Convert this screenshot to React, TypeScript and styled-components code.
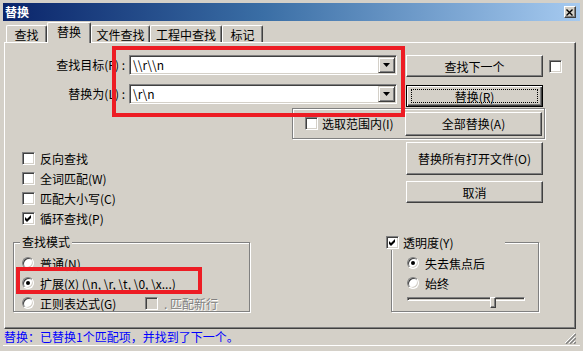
import React from 'react';
import styled, { createGlobalStyle } from 'styled-components';

const FACE = '#d4d0c8';
const SHADOW = '#808080';
const DARK = '#404040';

const GlobalStyle = createGlobalStyle`
  html, body {
    margin: 0;
    padding: 0;
    background: ${FACE};
  }
  body {
    font-family: 'Noto Sans CJK SC', 'DejaVu Sans', sans-serif;
    font-size: 12px;
    color: #000;
  }
  * {
    box-sizing: border-box;
  }
`;

type Option = { label: string; checked: boolean };

const OPTIONS: Option[] = [
  { label: '反向查找', checked: false },
  { label: '全词匹配(W)', checked: false },
  { label: '匹配大小写(C)', checked: false },
  { label: '循环查找(P)', checked: true }
];

const SLIDER_VALUE = 0.7;

const Window = styled.div`
  width: 583px;
  height: 351px;
  padding: 3px;
  background: ${FACE};
  overflow: hidden;
`;

const TitleBar = styled.div`
  display: flex;
  align-items: center;
  justify-content: space-between;
  height: 18px;
  padding: 0 4px 0 2px;
  background: linear-gradient(90deg, #0a246a 0%, #3a6ea5 45%, #a6caf0 100%);
`;

const TitleText = styled.span`
  color: #fff;
  font-weight: 700;
  font-size: 12px;
  line-height: 18px;
`;

const CloseButton = styled.div`
  display: flex;
  align-items: center;
  justify-content: center;
  width: 12px;
  height: 12px;
  background: ${FACE};
  border: 1px solid;
  border-color: #fff ${DARK} ${DARK} #fff;
  box-shadow: inset -1px -1px 0 ${SHADOW};
`;

const TabRow = styled.div`
  display: flex;
  align-items: flex-end;
  height: 20px;
  margin: 1px 0 0 3px;
`;

const Tab = styled.div<{ $w: number; $active?: boolean }>`
  position: relative;
  z-index: ${(p) => (p.$active ? 1 : 0)};
  display: flex;
  justify-content: center;
  width: ${(p) => p.$w}px;
  height: ${(p) => (p.$active ? 21 : 17)}px;
  margin-bottom: ${(p) => (p.$active ? -1 : 0)}px;
  padding-top: 2px;
  line-height: 14px;
  background: ${FACE};
  border-top: 1px solid #fff;
  border-left: 1px solid #fff;
  border-right: 1px solid ${DARK};
  border-radius: 2px 2px 0 0;
  box-shadow: inset -1px 0 0 ${SHADOW};
`;

const Panel = styled.div`
  position: relative;
  width: 572px;
  height: 287px;
  margin-left: 1px;
  border: 1px solid;
  border-color: #fff ${DARK} ${DARK} #fff;
  box-shadow: inset -1px -1px 0 ${SHADOW};
`;

const FieldRow = styled.div<{ $top: number }>`
  display: flex;
  align-items: flex-start;
  margin-top: ${(p) => p.$top}px;
`;

const FieldLabel = styled.label`
  width: 120px;
  height: 20px;
  line-height: 20px;
  text-align: right;
  white-space: nowrap;
`;

const Combo = styled.div`
  display: flex;
  align-items: center;
  width: 268px;
  height: 20px;
  margin-left: 4px;
  background: #fff;
  border: 1px solid;
  border-color: ${SHADOW} #fff #fff ${SHADOW};
  box-shadow: inset 1px 1px 0 ${DARK}, inset -1px -1px 0 ${FACE};
  padding: 1px 1px 1px 3px;
`;

const ComboText = styled.span`
  flex: 1;
  line-height: 16px;
  white-space: nowrap;
`;

const DropButton = styled.div`
  display: flex;
  align-items: center;
  justify-content: center;
  width: 17px;
  height: 16px;
  background: ${FACE};
  border: 1px solid;
  border-color: ${FACE} ${DARK} ${DARK} ${FACE};
  box-shadow: inset 1px 1px 0 #fff, inset -1px -1px 0 ${SHADOW};
`;

const Button = styled.button<{ $w?: number; $h?: number; $default?: boolean }>`
  position: relative;
  display: flex;
  align-items: center;
  justify-content: center;
  flex-shrink: 0;
  width: ${(p) => p.$w ?? 137}px;
  height: ${(p) => p.$h ?? 22}px;
  margin: 0;
  padding: 0;
  font: inherit;
  color: #000;
  background: ${FACE};
  border: 1px solid;
  border-color: ${(p) => (p.$default ? '#000' : `#fff ${DARK} ${DARK} #fff`)};
  box-shadow: ${(p) =>
    p.$default
      ? `inset 1px 1px 0 #fff, inset -1px -1px 0 ${DARK}, inset -2px -2px 0 ${SHADOW}`
      : `inset -1px -1px 0 ${SHADOW}`};
`;

const FocusRing = styled.span`
  position: absolute;
  inset: 3px 4px 3px 4px;
  border: 1px dotted #000;
`;

const CheckBox = styled.span<{ $disabled?: boolean }>`
  display: inline-flex;
  align-items: center;
  justify-content: center;
  flex-shrink: 0;
  width: 13px;
  height: 13px;
  background: ${(p) => (p.$disabled ? FACE : '#fff')};
  border: 1px solid;
  border-color: ${SHADOW} #fff #fff ${SHADOW};
  box-shadow: inset 1px 1px 0 ${DARK}, inset -1px -1px 0 ${FACE};
`;

const Radio = styled.span<{ $checked?: boolean }>`
  display: inline-flex;
  align-items: center;
  justify-content: center;
  flex-shrink: 0;
  width: 12px;
  height: 12px;
  border-radius: 50%;
  background: #fff;
  border: 1px solid;
  border-color: ${SHADOW} #fff #fff ${SHADOW};
  box-shadow: inset 1px 1px 0 ${DARK}, inset -1px -1px 0 ${FACE};
  &::after {
    content: '';
    display: ${(p) => (p.$checked ? 'block' : 'none')};
    width: 4px;
    height: 4px;
    border-radius: 50%;
    background: #000;
  }
`;

const HeaderCheck = styled(CheckBox)`
  margin: 5px 0 0 6px;
`;

const ScopeGroup = styled.div`
  display: flex;
  align-items: center;
  width: 253px;
  height: 31px;
  margin: 1px 0 0 287px;
  padding: 0 2px 0 12px;
  border: 1px solid ${SHADOW};
  box-shadow: inset 1px 1px 0 #fff, 1px 1px 0 #fff;
`;

const OptionLine = styled.div<{ $gap?: number }>`
  display: flex;
  align-items: center;
  gap: ${(p) => p.$gap ?? 5}px;
  height: 20px;
  white-space: nowrap;
`;

const OptionText = styled.span<{ $w?: number; $disabled?: boolean }>`
  display: inline-block;
  width: ${(p) => (p.$w ? `${p.$w}px` : 'auto')};
  color: ${(p) => (p.$disabled ? SHADOW : '#000')};
  text-shadow: ${(p) => (p.$disabled ? '1px 1px 0 #fff' : 'none')};
`;

const PushRight = styled.div`
  margin-left: auto;
`;

const MiddleSection = styled.div`
  display: flex;
  height: 97px;
`;

const OptionColumn = styled.div`
  display: flex;
  flex-direction: column;
  width: 401px;
  padding: 9px 0 0 17px;
`;

const ButtonColumn = styled.div`
  display: flex;
  flex-direction: column;
  gap: 6px;
  padding-top: 3px;
`;

const BottomSection = styled.div`
  display: flex;
  align-items: flex-start;
  padding-top: 6px;
`;

const GroupBox = styled.div<{ $left: number; $w: number; $pl: number }>`
  position: relative;
  width: ${(p) => p.$w}px;
  height: 70px;
  margin-left: ${(p) => p.$left}px;
  padding: 10px 0 0 ${(p) => p.$pl}px;
  border: 1px solid ${SHADOW};
  box-shadow: inset 1px 1px 0 #fff, 1px 1px 0 #fff;
`;

const GroupLegend = styled.span`
  position: absolute;
  left: 6px;
  top: -8px;
  padding: 0 2px;
  line-height: 14px;
  background: ${FACE};
`;

const CheckLegend = styled.div`
  position: absolute;
  left: -6px;
  top: -8px;
  display: flex;
  align-items: center;
  gap: 4px;
  width: 119px;
  height: 15px;
  background: ${FACE};
  white-space: nowrap;
`;

const Slider = styled.div`
  position: relative;
  width: 118px;
  height: 11px;
`;

const SliderTrack = styled.div`
  margin-top: 4px;
  height: 4px;
  border: 1px solid;
  border-color: ${SHADOW} #fff #fff ${SHADOW};
  box-shadow: inset 1px 1px 0 ${DARK};
`;

const SliderThumb = styled.div`
  position: absolute;
  top: 0;
  width: 6px;
  height: 11px;
  background: ${FACE};
  border: 1px solid;
  border-color: #fff ${DARK} ${DARK} #fff;
  box-shadow: inset -1px -1px 0 ${SHADOW};
`;

const Annotation = styled.div<{ $x: number; $y: number; $w: number; $h: number }>`
  position: absolute;
  left: ${(p) => p.$x}px;
  top: ${(p) => p.$y}px;
  width: ${(p) => p.$w}px;
  height: ${(p) => p.$h}px;
  border: 4px solid #ed1c24;
  pointer-events: none;
  z-index: 3;
`;

const StatusBar = styled.div`
  display: flex;
  align-items: center;
  justify-content: space-between;
  height: 17px;
  padding: 0 1px 0 1px;
  border-bottom: 1px solid #fff;
  color: #0000ff;
  line-height: 16px;
`;

const Grip = styled.svg`
  align-self: flex-end;
  margin: 0 3px 1px 0;
`;

function Check() {
  return (
    <svg width="7" height="7" viewBox="0 0 7 7">
      <polygon points="0,2 2,4 6,0 6,3 2,7 0,5" fill="#000" />
    </svg>
  );
}

function Arrow() {
  return (
    <svg width="7" height="4" viewBox="0 0 7 4">
      <polygon points="0,0 7,0 3.5,4" fill="#000" />
    </svg>
  );
}

function App() {
  return (
    <>
      <GlobalStyle />
      <Window>
        <TitleBar>
          <TitleText>替换</TitleText>
          <CloseButton>
            <svg width="8" height="7" viewBox="0 0 8 7">
              <path d="M0.5 0.5 L6.5 6.5 M6.5 0.5 L0.5 6.5" stroke="#000" strokeWidth="1.4" />
            </svg>
          </CloseButton>
        </TitleBar>

        <TabRow>
          <Tab $w={41}>查找</Tab>
          <Tab $w={44} $active>
            替换
          </Tab>
          <Tab $w={59}>文件查找</Tab>
          <Tab $w={72}>工程中查找</Tab>
          <Tab $w={41}>标记</Tab>
        </TabRow>

        <Panel>
          <FieldRow $top={12}>
            <FieldLabel>查找目标(F) :</FieldLabel>
            <Combo>
              <ComboText>{'\\\\r\\\\n'}</ComboText>
              <DropButton>
                <Arrow />
              </DropButton>
            </Combo>
            <Button style={{ marginLeft: 9 }}>查找下一个</Button>
            <HeaderCheck />
          </FieldRow>

          <FieldRow $top={7}>
            <FieldLabel>替换为(L) :</FieldLabel>
            <Combo>
              <ComboText>{'\\r\\n'}</ComboText>
              <DropButton>
                <Arrow />
              </DropButton>
            </Combo>
            <Button $default style={{ marginLeft: 9, marginTop: 1 }}>
              <FocusRing />
              替换(R)
            </Button>
          </FieldRow>

          <ScopeGroup>
            <OptionLine $gap={4}>
              <CheckBox />
              <OptionText>选取范围内(I)</OptionText>
            </OptionLine>
            <PushRight>
              <Button $h={24}>全部替换(A)</Button>
            </PushRight>
          </ScopeGroup>

          <MiddleSection>
            <OptionColumn>
              {OPTIONS.map((opt) => (
                <OptionLine key={opt.label}>
                  <CheckBox>{opt.checked && <Check />}</CheckBox>
                  <OptionText>{opt.label}</OptionText>
                </OptionLine>
              ))}
            </OptionColumn>
            <ButtonColumn>
              <Button $h={33}>替换所有打开文件(O)</Button>
              <Button>取消</Button>
            </ButtonColumn>
          </MiddleSection>

          <BottomSection>
            <GroupBox $left={8} $w={237} $pl={8}>
              <GroupLegend>查找模式</GroupLegend>
              <OptionLine $gap={6}>
                <Radio />
                <OptionText>普通(N)</OptionText>
              </OptionLine>
              <OptionLine $gap={6}>
                <Radio $checked />
                <OptionText>{'扩展(X) (\\n, \\r, \\t, \\0, \\x...)'}</OptionText>
              </OptionLine>
              <OptionLine $gap={6}>
                <Radio />
                <OptionText $w={99}>正则表达式(G)</OptionText>
                <CheckBox $disabled />
                <OptionText $disabled>. 匹配新行</OptionText>
              </OptionLine>
            </GroupBox>

            <GroupBox $left={141} $w={148} $pl={15}>
              <CheckLegend>
                <CheckBox>
                  <Check />
                </CheckBox>
                <OptionText>透明度(Y)</OptionText>
              </CheckLegend>
              <OptionLine $gap={6}>
                <Radio $checked />
                <OptionText>失去焦点后</OptionText>
              </OptionLine>
              <OptionLine $gap={6}>
                <Radio />
                <OptionText>始终</OptionText>
              </OptionLine>
              <Slider>
                <SliderTrack />
                <SliderThumb style={{ left: Math.round(SLIDER_VALUE * 118) }} />
              </Slider>
            </GroupBox>
          </BottomSection>

          <Annotation $x={107} $y={3} $w={293} $h={71} />
          <Annotation $x={11} $y={224} $w={186} $h={27} />
        </Panel>

        <StatusBar>
          <span>替换：已替换1个匹配项，并找到了下一个。</span>
          <Grip width="12" height="12" viewBox="0 0 12 12">
            <path d="M11 1 L1 11 M11 5 L5 11 M11 9 L9 11" stroke="#fff" strokeWidth="1" />
            <path d="M12 2 L2 12 M12 6 L6 12 M12 10 L10 12" stroke={SHADOW} strokeWidth="1.4" />
          </Grip>
        </StatusBar>
      </Window>
    </>
  );
}

export default App;
